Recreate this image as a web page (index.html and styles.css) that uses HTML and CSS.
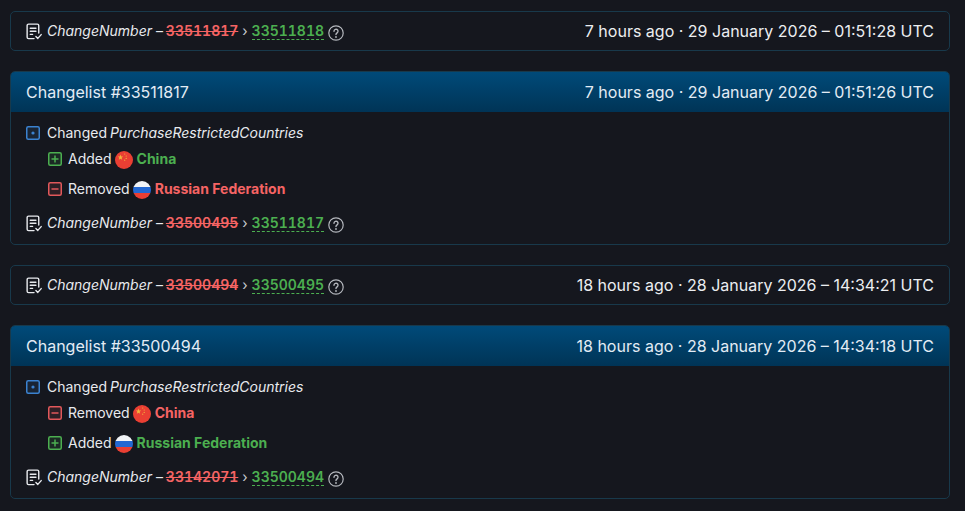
FILE: index.html
```html
<!DOCTYPE html>
<html lang="en">
<head>
<meta charset="utf-8">
<title>History</title>
<link rel="stylesheet" href="styles.css">
</head>
<body>
<svg class="defs" width="0" height="0" aria-hidden="true">
  <defs>
    <symbol id="i-cn" viewBox="0 0 18 18">
      <path d="M8.5 16.5H2.7a1.5 1.5 0 0 1-1.5-1.5V2.7a1.5 1.5 0 0 1 1.5-1.5h9.3a1.5 1.5 0 0 1 1.5 1.5V10.5" fill="none" stroke="currentColor" stroke-width="1.5" stroke-linecap="round" stroke-linejoin="round"/>
      <path d="M4.5 5.5h6M4.5 8.7h6M4.5 12h2.5M10.5 14.3l2 2 3.6-4" fill="none" stroke="currentColor" stroke-width="1.5" stroke-linecap="round" stroke-linejoin="round"/>
    </symbol>
    <symbol id="i-help" viewBox="0 0 16 16">
      <circle cx="8" cy="8" r="7.2" fill="none" stroke="currentColor" stroke-width="1.2"/>
      <path d="M6 6.2a2 2 0 1 1 3.1 1.7c-.7.5-1.1.9-1.1 1.7" fill="none" stroke="currentColor" stroke-width="1.4" stroke-linecap="round"/>
      <circle cx="8" cy="12" r=".9" fill="currentColor"/>
    </symbol>
    <symbol id="i-changed" viewBox="0 0 14 14">
      <rect x=".75" y=".75" width="12.5" height="12.5" rx="1.5" fill="currentColor" fill-opacity=".12" stroke="currentColor" stroke-width="1.5"/>
      <circle cx="7" cy="7" r="1.6" fill="currentColor"/>
    </symbol>
    <symbol id="i-plus" viewBox="0 0 14 14">
      <rect x=".75" y=".75" width="12.5" height="12.5" rx="1.5" fill="currentColor" fill-opacity=".12" stroke="currentColor" stroke-width="1.5"/>
      <path d="M3.5 7h7M7 3.5v7" fill="none" stroke="currentColor" stroke-width="1.5"/>
    </symbol>
    <symbol id="i-minus" viewBox="0 0 14 14">
      <rect x=".75" y=".75" width="12.5" height="12.5" rx="1.5" fill="currentColor" fill-opacity=".12" stroke="currentColor" stroke-width="1.5"/>
      <path d="M3.5 7h7" fill="none" stroke="currentColor" stroke-width="1.5"/>
    </symbol>
    <symbol id="f-cn" viewBox="0 0 18 18">
      <circle cx="9" cy="9" r="9" fill="#ea3f33"/>
      <path d="M5.5 3.6l.7 1.9 2 .1-1.6 1.2.6 2-1.7-1.1-1.7 1.1.6-2L2.8 5.6l2-.1z" fill="#f2b63c"/>
      <circle cx="9.7" cy="3" r=".6" fill="#f2b63c"/>
      <circle cx="11.2" cy="5" r=".6" fill="#f2b63c"/>
      <circle cx="11.2" cy="7.4" r=".6" fill="#f2b63c"/>
      <circle cx="9.7" cy="9.2" r=".6" fill="#f2b63c"/>
    </symbol>
    <symbol id="f-ru" viewBox="0 0 18 18">
      <clipPath id="ru-clip"><circle cx="9" cy="9" r="9"/></clipPath>
      <g clip-path="url(#ru-clip)">
        <rect width="18" height="6" fill="#f1f3f6"/>
        <rect y="6" width="18" height="6" fill="#2468d2"/>
        <rect y="12" width="18" height="6" fill="#ea3f33"/>
      </g>
    </symbol>
  </defs>
</svg>

<main class="history">
  <section class="card">
    <div class="row-head">
      <span class="cn-line">
        <svg class="ico-cn"><use href="#i-cn"/></svg>
        <i>ChangeNumber</i> – <s class="old">33511817</s> <span class="arrow">›</span> <span class="new">33511818</span>
        <svg class="ico-help"><use href="#i-help"/></svg>
      </span>
      <span class="when">7 hours ago · 29 January 2026 – 01:51:28 UTC</span>
    </div>
  </section>

  <section class="card">
    <header class="blue-head">
      <span>Changelist #33511817</span>
      <span>7 hours ago · 29 January 2026 – 01:51:26 UTC</span>
    </header>
    <div class="card-body">
      <div class="line top">
        <svg class="ico-box blue"><use href="#i-changed"/></svg>
        <span>Changed <i class="prop">PurchaseRestrictedCountries</i></span>
      </div>
      <div class="line sub">
        <svg class="ico-box green"><use href="#i-plus"/></svg>
        <span>Added</span>
        <svg class="flag"><use href="#f-cn"/></svg>
        <b class="added">China</b>
      </div>
      <div class="line sub">
        <svg class="ico-box red"><use href="#i-minus"/></svg>
        <span>Removed</span>
        <svg class="flag"><use href="#f-ru"/></svg>
        <b class="removed">Russian Federation</b>
      </div>
      <div class="line foot">
        <span class="cn-line">
          <svg class="ico-cn"><use href="#i-cn"/></svg>
          <i>ChangeNumber</i> – <s class="old">33500495</s> <span class="arrow">›</span> <span class="new">33511817</span>
          <svg class="ico-help"><use href="#i-help"/></svg>
        </span>
      </div>
    </div>
  </section>

  <section class="card">
    <div class="row-head">
      <span class="cn-line">
        <svg class="ico-cn"><use href="#i-cn"/></svg>
        <i>ChangeNumber</i> – <s class="old">33500494</s> <span class="arrow">›</span> <span class="new">33500495</span>
        <svg class="ico-help"><use href="#i-help"/></svg>
      </span>
      <span class="when">18 hours ago · 28 January 2026 – 14:34:21 UTC</span>
    </div>
  </section>

  <section class="card">
    <header class="blue-head">
      <span>Changelist #33500494</span>
      <span>18 hours ago · 28 January 2026 – 14:34:18 UTC</span>
    </header>
    <div class="card-body">
      <div class="line top">
        <svg class="ico-box blue"><use href="#i-changed"/></svg>
        <span>Changed <i class="prop">PurchaseRestrictedCountries</i></span>
      </div>
      <div class="line sub">
        <svg class="ico-box red"><use href="#i-minus"/></svg>
        <span>Removed</span>
        <svg class="flag"><use href="#f-cn"/></svg>
        <b class="removed">China</b>
      </div>
      <div class="line sub">
        <svg class="ico-box green"><use href="#i-plus"/></svg>
        <span>Added</span>
        <svg class="flag"><use href="#f-ru"/></svg>
        <b class="added">Russian Federation</b>
      </div>
      <div class="line foot">
        <span class="cn-line">
          <svg class="ico-cn"><use href="#i-cn"/></svg>
          <i>ChangeNumber</i> – <s class="old">33142071</s> <span class="arrow">›</span> <span class="new">33500494</span>
          <svg class="ico-help"><use href="#i-help"/></svg>
        </span>
      </div>
    </div>
  </section>
</main>
</body>
</html>
```
FILE: styles.css
```css
* { box-sizing: border-box; }
html, body { margin: 0; height: 100%; overflow: hidden; }
body {
  background: #15171e;
  color: #e8eaee;
  font-family: Inter, "Liberation Sans", sans-serif;
  font-size: 14px;
  line-height: 20px;
}
.defs { position: absolute; }
.history {
  display: flex;
  flex-direction: column;
  gap: 20px;
  width: 940px;
  margin: 11px 0 0 10px;
}
.card {
  border: 1px solid #18394b;
  border-radius: 5px;
  overflow: hidden;
}
.row-head {
  display: flex;
  justify-content: space-between;
  align-items: center;
  height: 38px;
  padding: 0 15px;
}
.when { font-size: 16px; color: #eceef1; }
.cn-line { display: block; white-space: nowrap; }
.cn-line i { color: #e8eaee; }
.prop { margin-left: -1px; }
.ico-cn {
  width: 17px;
  height: 17px;
  vertical-align: -4px;
  color: #e8eaee;
}
.old {
  color: #f56464;
  font-weight: 600;
  font-variant-numeric: tabular-nums;
  margin-left: -1px;
}
.new {
  color: #4caf50;
  font-weight: 600;
  font-variant-numeric: tabular-nums;
  border-bottom: 1px dashed #4caf50;
}
.arrow { color: #c9ccd2; }
.ico-help {
  width: 16px;
  height: 16px;
  vertical-align: -5px;
  color: #b4b7bd;
}
.blue-head {
  display: flex;
  justify-content: space-between;
  align-items: center;
  height: 40px;
  padding: 0 15px;
  font-size: 16px;
  color: #e3ecf5;
  background: linear-gradient(#004a79, #003456);
}
.card-body { padding: 11px 15px; }
.line { display: flex; align-items: center; gap: 6px; height: 20px; }
.top { gap: 7px; margin-bottom: 1px; }
.sub { height: 30px; padding-left: 22px; }
.foot { margin-top: 9px; }
.ico-box { width: 14px; height: 14px; flex: none; }
.blue { color: #3b82d0; }
.green { color: #4caf50; }
.red { color: #e2585b; }
.flag { width: 18px; height: 18px; flex: none; margin: 2px -2px 0 -3px; }
.added { color: #4caf50; font-weight: 700; }
.removed { color: #f56464; font-weight: 700; }
```
